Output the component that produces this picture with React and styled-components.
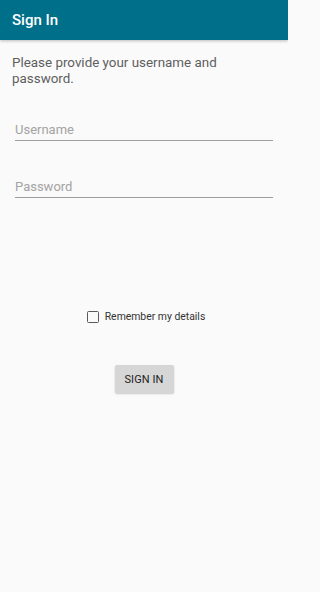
import React from "react";
import styled, { createGlobalStyle } from "styled-components";

const Global = createGlobalStyle`
  html, body { margin: 0; padding: 0; background: #fafafa; }
  body { font-family: Roboto, "Noto Sans", sans-serif; }
  * { box-sizing: border-box; }
`;

const Screen = styled.div`
  width: 288px;
  height: 592px;
  background: #fafafa;
  display: flex;
  flex-direction: column;
  overflow: hidden;
`;

const AppBar = styled.header`
  height: 40px;
  background: #006f8a;
  display: flex;
  align-items: center;
  padding: 0 12px;
  box-shadow: 0 1px 3px rgba(0, 0, 0, 0.25);
  position: relative;
  z-index: 1;
`;

const Title = styled.h1`
  margin: 0;
  font-size: 15px;
  font-weight: 500;
  color: #ffffff;
  line-height: 1;
`;

const Body = styled.main`
  display: flex;
  flex-direction: column;
  padding: 15px 12px 0 12px;
`;

const Intro = styled.p`
  margin: 0;
  font-size: 13.4px;
  line-height: 15.5px;
  color: #5e5e5e;
  padding-right: 40px;
`;

const Field = styled.input`
  display: block;
  width: 258px;
  margin-left: 3px;
  border: none;
  border-bottom: 1px solid #9e9e9e;
  background: transparent;
  font-family: inherit;
  font-size: 13px;
  color: #333;
  padding: 0 0 4px 0;
  height: 19px;
  outline: none;
  margin-top: ${(p) => p.$top}px;
  &::placeholder { color: #a3a3a3; }
`;

const CheckRow = styled.label`
  display: flex;
  align-items: center;
  justify-content: center;
  gap: 6px;
  margin-top: 112px;
  padding-left: 4px;
  font-size: 10.4px;
  color: #333;
`;

const Box = styled.span`
  width: 12px;
  height: 12px;
  border: 1.5px solid #5a5a5a;
  border-radius: 1.5px;
  display: inline-block;
`;

const ButtonRow = styled.div`
  display: flex;
  justify-content: center;
  margin-top: 42px;
`;

const Button = styled.button`
  width: 59px;
  height: 28px;
  border: none;
  border-radius: 2px;
  background: #d6d6d6;
  box-shadow: 0 1px 2px rgba(0, 0, 0, 0.2);
  font-family: inherit;
  font-size: 11px;
  font-weight: 400;
  color: #222;
  letter-spacing: 0.1px;
  padding: 0;
`;

export default function App() {
  return (
    <>
      <Global />
      <Screen>
        <AppBar>
          <Title>Sign In</Title>
        </AppBar>
        <Body>
          <Intro>Please provide your username and password.</Intro>
          <Field $top={36} placeholder="Username" />
          <Field $top={38} type="password" placeholder="Password" />
          <CheckRow>
            <Box />
            Remember my details
          </CheckRow>
          <ButtonRow>
            <Button>SIGN IN</Button>
          </ButtonRow>
        </Body>
      </Screen>
    </>
  );
}
